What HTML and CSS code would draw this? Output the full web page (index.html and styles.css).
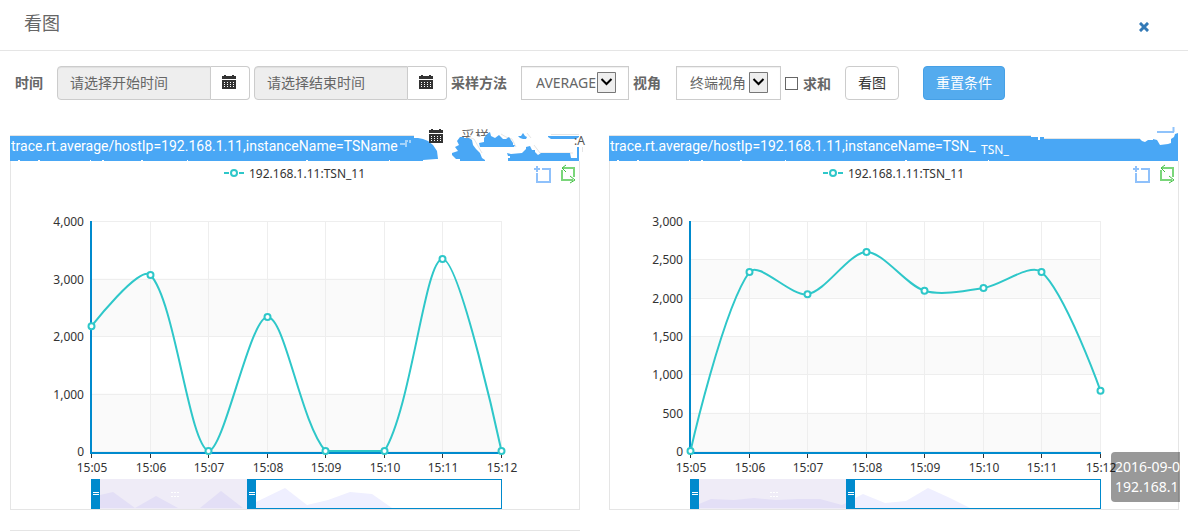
FILE: index.html
```html
<!DOCTYPE html>
<html lang="zh-CN">
<head>
<meta charset="utf-8">
<title>看图</title>
<link rel="stylesheet" href="styles.css">
</head>
<body>
<svg class="sprite" aria-hidden="true">
  <symbol id="calendar" viewBox="0 0 14 14">
    <path d="M2 1V0h2v1h6V0h2v1h2v3H0V1z"/>
    <path fill-rule="evenodd" d="M0 5h14v9H0zM2 7v1h1V7zm3 0v1h1V7zm3 0v1h1V7zm3 0v1h1V7zM2 9v1h1V9zm3 0v1h1V9zm3 0v1h1V9zm3 0v1h1V9zM2 11v1h1v-1zm3 0v1h1v-1zm3 0v1h1v-1zm3 0v1h1v-1z"/>
  </symbol>
  <symbol id="arrow" viewBox="0 0 19 21">
    <path class="arrow-box" d="M.5.5h18v20H.5z"/>
    <path class="arrow-mark" d="M4.500 7l5 5 5-5"/>
  </symbol>
</svg>

<header class="dialog-head">
  <h1 class="dialog-title">看图</h1>
  <button class="close" type="button" aria-label="关闭">
    <svg viewBox="0 0 10 10" width="10" height="10"><path d="M2 2l6 6M8 2L2 8"/></svg>
  </button>
</header>

<form class="filters">
  <label class="label label-time" for="start">时间</label>
  <div class="date">
    <input class="date-input" id="start" type="text" placeholder="请选择开始时间" readonly>
    <button class="date-button" type="button" aria-label="选择开始时间"><svg width="14" height="14"><use href="#calendar"/></svg></button>
  </div>
  <div class="date">
    <input class="date-input" id="end" type="text" placeholder="请选择结束时间" aria-label="结束时间" readonly>
    <button class="date-button" type="button" aria-label="选择结束时间"><svg width="14" height="14"><use href="#calendar"/></svg></button>
  </div>
  <label class="label label-method" for="method">采样方法</label>
  <div class="select">
    <select class="select-input select-method" id="method"><option>AVERAGE</option></select>
    <svg class="select-arrow" width="19" height="21"><use href="#arrow"/></svg>
  </div>
  <label class="label label-view" for="view">视角</label>
  <div class="select">
    <select class="select-input select-view" id="view"><option>终端视角</option></select>
    <svg class="select-arrow" width="19" height="21"><use href="#arrow"/></svg>
  </div>
  <label class="check"><input class="check-box" type="checkbox"><span>求和</span></label>
  <button class="button" type="button">看图</button>
  <button class="button button-primary" type="reset">重置条件</button>
</form>

<main class="panels">
  <section class="panel">
    <svg class="panel-band" viewBox="10 125 570 36" aria-hidden="true">
      <defs><clipPath id="cut"><path d="M460 128h30l-2 7-8 2-6-2-8 3-6-2z"/></clipPath></defs>
      <path class="edge" d="M10 135.500h404M467 137l7 2 8 14M501 134l5 3 6 2 4 8M527 133l4 5M534 145l6 8h33M551 134.500h28M582.500 147v5"/>
      <path class="band" d="M10 136H414V138H418L423 139L428 141L433 145L437 151L438 159H436L423 160V161H10z
        M460 137H464V138L469 138L472 140L473 145L476 149L480 153L482 158L485 160V161H460V159H456L454 157L452 155V153L458 151L455 147L459 145L457 141z
        M480 147L479 143L484 142V138L487 134L490 132L491 136L495 138L499 135L503 139L506 139L509 137L513 143V145H515L514 147z
        M518 136L521 136L523 133L525 136L527 137L526 139L523 139L520 138z
        M548 136H579V137L576 139H551L548 137z
        M507 153L511 154L522 153L526 149V147L530 146L532 150H535V152L538 155L541 153H570L571 158H577V147H579V161H508V158H510V156H508z"/>
      <path class="specks" d="M18 160.500h2M38 160.500h2M90 160.500h1M102 160.500h2M141 160.500h2M187 160.500h1M306 160.500h2M389 160.500h1"/>
      <path class="shards" d="M400 144h5M405 141h3M406 142v5M410 140v3"/>
      <text class="ghost" x="461" y="141" clip-path="url(#cut)">采样</text>
      <text class="ghost-small" x="574" y="145">:A</text>
      <svg class="ghost-icon" x="429" y="129" width="14" height="14"><use href="#calendar"/></svg>
    </svg>
    <h2 class="panel-title">trace.rt.average/hostIp=192.168.1.11,instanceName=TSName</h2>
    <svg class="chart" id="chart-left" viewBox="0 0 568 348" role="img" aria-label="192.168.1.11:TSN_11"></svg>
  </section>

  <section class="panel">
    <svg class="panel-band" viewBox="609 125 570 36" aria-hidden="true">
      <path class="edge" d="M609 135.500h422M1044 138.500h96"/>
      <path class="band" d="M609 136H1031V137H1038V140H1040V137H1044V139H1140L1142 141L1145 142L1148 140L1153 140V139L1157 140L1160 145L1168 144L1171 143V139L1174 137L1175 134L1178 133V161H609z"/>
      <path class="specks" d="M617 160.500h2M637 160.500h2M689 160.500h1M701 160.500h2M740 160.500h2M785 160.500h1M905 160.500h2M988 160.500h1"/>
      <text class="torn" x="981" y="154">TSN_</text>
      <path class="stray" d="M1157 132h17M1173.500 127v5"/>
    </svg>
    <h2 class="panel-title">trace.rt.average/hostIp=192.168.1.11,instanceName=TSN_</h2>
    <svg class="chart" id="chart-right" viewBox="0 0 568 348" role="img" aria-label="192.168.1.11:TSN_11"></svg>
    <div class="tip-area"><div class="tip">2016-09-0<br>192.168.1</div></div>
  </section>

  <section class="panel panel-next"></section>
</main>
<script src="chart.js"></script>
</body>
</html>
```
FILE: styles.css
```css
* { box-sizing: border-box; }

body {
  margin: 0;
  background: #fff;
  color: #666;
  font: 14px/20px "Noto Sans", "Noto Sans CJK SC", sans-serif;
}

.sprite { position: absolute; width: 0; height: 0; }

.dialog-head {
  display: flex;
  align-items: center;
  justify-content: space-between;
  height: 51px;
  padding: 0 38px 4px 24px;
  border-bottom: 1px solid #e5e5e5;
}
.dialog-title { margin: 0; font-size: 18px; font-weight: 400; }
.close { display: flex; margin-top: 8px; padding: 0; border: 0; background: none; }
.close path { stroke: #337ab7; stroke-width: 3; fill: none; stroke-linecap: square; }
.close svg { margin-right: 1px; }

.filters { display: flex; align-items: center; height: 34px; margin: 15px 15px 0; white-space: nowrap; }
.label { flex: none; padding-bottom: 1px; font-weight: 700; }
.label-time { margin-right: 14px; }
.label-method { margin-right: 14px; }
.label-view { margin: 0 15px 0 4px; }

.date { display: flex; flex: none; margin-right: 4px; }
.date-input {
  width: 154px;
  height: 34px;
  padding: 0 12px 2px;
  border: 1px solid #ccc;
  border-radius: 4px 0 0 4px;
  background: #eee;
  box-shadow: inset 0 1px 1px #0001;
  color: #666;
  font: inherit;
}
.date-input::placeholder { color: #666; opacity: 1; }
.date-button {
  display: flex;
  align-items: center;
  justify-content: center;
  width: 39px;
  height: 34px;
  padding: 0 2px 2px 0;
  border: 1px solid #ccc;
  border-left: 0;
  border-radius: 0 4px 4px 0;
  background: #fff;
  fill: #333;
}

.select { position: relative; flex: none; }
.select-input {
  appearance: none;
  height: 34px;
  padding: 0 30px 0 14px;
  border: 1px solid #ccc;
  border-radius: 0;
  background: #fff;
  box-shadow: inset 0 1px 1px #0001;
  color: #666;
  font: inherit;
}
.select-method { width: 108px; }
.select-view { width: 105px; padding-left: 13px; }
.select-arrow { position: absolute; right: 13px; top: 6px; pointer-events: none; }
.arrow-box { fill: #eee; stroke: #777; }
.arrow-mark { fill: none; stroke: #000; stroke-width: 2; }

.check { display: flex; align-items: center; gap: 5px; margin: 0 14px 0 4px; font-weight: 700; }
.check span { padding-top: 2px; }
.check-box { appearance: none; width: 13px; height: 13px; margin: 0; border: 1px solid #666; background: #fff; }

.button {
  height: 34px;
  padding: 0 12px;
  border: 1px solid #ccc;
  border-radius: 4px;
  background: #fff;
  color: #333;
  font: inherit;
}
.button-primary { margin-left: 24px; border-color: #46a0e6; background: #54abee; color: #fff; }

.panels { display: grid; grid-template-columns: 1fr 1fr; gap: 20px 29px; padding: 35px 9px 0 10px; }
.panel { position: relative; border: 1px solid #e5e5e5; border-top-color: transparent; min-width: 0; }
.panel-next { height: 1px; border-width: 1px 0 0; border-color: #e5e5e5; }
.panel-band { position: absolute; left: -1px; top: -11px; width: calc(100% + 2px); overflow: visible; background: linear-gradient(#fff, #fff) right bottom / 2px 26px no-repeat; }
.panel-title {
  position: relative;
  margin: 0;
  height: 25px;
  font-family: Roboto, sans-serif;
  font-size: 14px;
  line-height: 20px;
  font-weight: 400;
  color: #fff;
  white-space: nowrap;
  overflow: hidden;
}
.band { fill: #49a7f5; }
.edge { fill: none; stroke: #e5e5e5; }
.specks { stroke: #fff; }
.shards { fill: none; stroke: #fff; }
.stray { fill: none; stroke: #8fc3fb; stroke-width: 2; }
.torn { fill: #fff; font-size: 12px; }
.ghost { fill: #666; font-size: 14px; }
.ghost-small { fill: #555; font-size: 12px; }
.ghost-icon { fill: #333; }

.chart { display: block; width: 100%; font-size: 12px; fill: #333; overflow: visible; }
.stripe { fill: #fafafa; }
.grid { stroke: #eee; }
.axis { stroke: #008acd; stroke-width: 2; }
.tick { stroke: #333; }
.line { fill: none; stroke: #2ec7c9; stroke-width: 2; }
.dot { fill: #fff; stroke: #2ec7c9; stroke-width: 2; }
.end { text-anchor: end; }
.mid { text-anchor: middle; }
.frame { fill: #fff; stroke: #008acd; }
.shadow { fill: #efefff; }
.chosen { fill: #efecf7; }
.chosen-shadow { fill: #e3dff6; }
.handle { fill: #008acd; }
.grip { stroke: #fff; fill: none; }
.grip-dots { stroke: #fff; stroke-dasharray: 2 1; fill: none; }
.tool-zoom { fill: none; stroke: #8fc1fb; stroke-width: 2; }
.tool-reset { fill: none; stroke: #7ad67a; stroke-width: 2; }
.tool-tips { fill: none; stroke: #3fbf3f; stroke-width: 1; }

.tip-area { position: absolute; right: -2px; bottom: 7px; width: 69px; overflow: hidden; }
.tip {
  width: 120px;
  padding: 5px 4px;
  border-radius: 4px;
  background: rgba(0, 0, 0, .4);
  color: #fff;
  white-space: nowrap;
}
```
FILE: chart.js
```js
const X = [80, 139, 197, 256, 314, 373, 431, 490];
const TOP = 60, BASE = 290;

// Cubic curve through the points, control points kept inside the data's range.
function smooth(points, amount) {
  const ys = points.map(p => p[1]);
  const lo = Math.min(...ys), hi = Math.max(...ys);
  const dist = (a, b) => Math.hypot(a[0] - b[0], a[1] - b[1]);
  const controls = points.map((p, i) => {
    if (i === 0 || i === points.length - 1) return [p, p];
    const a = points[i - 1], b = points[i + 1];
    const d0 = dist(a, p), d1 = dist(p, b), sum = d0 + d1;
    const vx = (b[0] - a[0]) * amount, vy = (b[1] - a[1]) * amount;
    const clamp = y => Math.max(lo, Math.min(hi, y));
    return [
      [p[0] - vx * d0 / sum, clamp(p[1] - vy * d0 / sum)],
      [p[0] + vx * d1 / sum, clamp(p[1] + vy * d1 / sum)]
    ];
  });
  let d = `M${points[0]}`;
  for (let i = 1; i < points.length; i++) {
    d += `C${controls[i - 1][1]} ${controls[i][0]} ${points[i]}`;
  }
  return d;
}

function draw(id, values, max, step, chosen, rest) {
  const y = v => BASE - v / max * (BASE - TOP);
  const points = values.map((v, i) => [X[i] + 0.5, y(v)]);
  let s = '';
  for (let v = 0; v < max; v += step * 2) {
    s += `<rect class="stripe" x="80" y="${y(v + step)}" width="411" height="${y(v) - y(v + step)}"/>`;
  }
  for (let v = 0; v <= max; v += step) {
    const gy = Math.round(y(v)) + 0.5;
    s += `<path class="grid" d="M80 ${gy}h411"/>`;
    s += `<text class="end" x="73" y="${gy + 4}">${v.toLocaleString('en-US')}</text>`;
  }
  X.forEach((x, i) => {
    s += `<path class="grid" d="M${x + 0.5} 60v231"/><path class="tick" d="M${x + 0.5} 293v4"/>`;
    s += `<text class="mid" x="${x + 1}" y="311">15:${String(5 + i).padStart(2, '0')}</text>`;
  });
  s += '<path class="axis" d="M80 60v233M79 292h412"/>';
  s += `<path class="line" d="${smooth(points, 0.3)}"/>`;
  points.forEach(p => { s += `<circle class="dot" cx="${p[0]}" cy="${p[1]}" r="3"/>`; });

  s += '<path class="line" d="M213 12h5M228 12h5"/><circle class="dot" cx="223" cy="12" r="3"/>';
  s += '<text x="238" y="17">192.168.1.11:TSN_11</text>';
  s += '<path class="tool-zoom" d="M531 8h8v13h-13v-9"/><path class="tool-zoom" d="M523 8h6M526 5v6"/>';
  s += '<path class="tool-reset" d="M552 7h11v9M562 19h-11V9"/><path class="tool-tips" d="M555 4l-4 3 4 4M559 15l5 4-5 3"/>';

  s += '<rect class="frame" x="80.5" y="318.5" width="410" height="29"/>';
  s += `<path class="shadow" d="${rest}"/>`;
  s += '<rect class="chosen" x="89" y="318" width="147" height="30"/>';
  s += `<path class="chosen-shadow" d="${chosen}"/>`;
  s += '<path class="handle" d="M80 318h9v30h-9zM236 318h9v30h-9z"/>';
  s += '<path class="grip" d="M82 331.500h6M82 333.500h6M238 331.500h6M238 333.500h6"/>';
  s += '<path class="grip-dots" d="M160 331.500h8M160 335.500h8"/>';
  document.getElementById(id).innerHTML = s;
}

draw('chart-left', [2170, 3060, 0, 2330, 0, 0, 3340, 0], 4000, 1000,
  'M89 334L102 331L124 347L145 335L167 347H189L210 330L232 347H89z',
  'M245 341L274 327L296 344L317 339L339 331L361 333L381 347H245z');
draw('chart-right', [0, 2335, 2045, 2595, 2090, 2125, 2335, 785], 3000, 500,
  'M89 343L101 338L124 339L144 337L166 339L188 338H210L232 344L236 342V347H89z',
  'M245 337L253 333L275 342L296 340L318 327L340 337L360 347H245z');
```
